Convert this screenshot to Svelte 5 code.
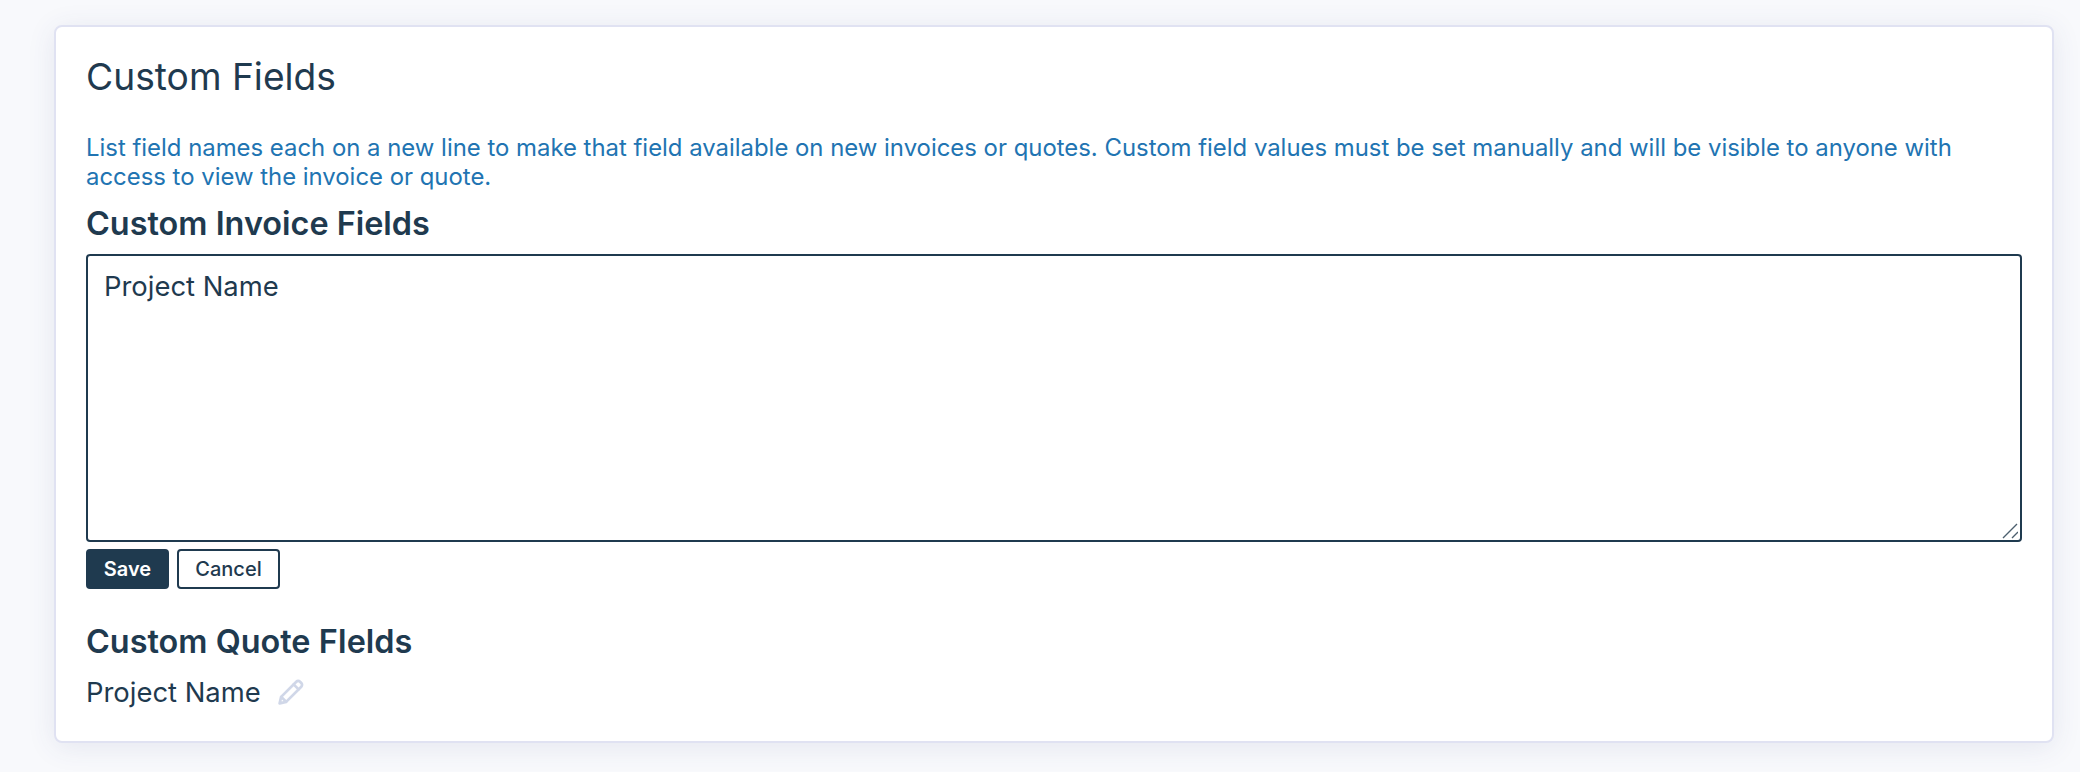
<script lang="ts">
	let invoiceFields = $state('Project Name');
</script>

<main class="page">
	<section class="card">
		<h1 class="title">Custom Fields</h1>
		<p class="help">
			List field names each on a new line to make that field available on new invoices or quotes. Custom field values must be set manually and will be visible to anyone with access to view the invoice or quote.
		</p>
		<h2 class="subtitle">Custom Invoice Fields</h2>
		<div class="input-wrap">
			<textarea class="field-input" bind:value={invoiceFields}></textarea>
			<svg class="grip" viewBox="0 0 16 16" width="16" height="16" stroke="#4c5f6e" stroke-width="1.4">
				<path d="M1 15L15 1M10 15l6-6" />
			</svg>
		</div>
		<div class="actions">
			<button class="btn btn-primary">Save</button>
			<button class="btn btn-outline">Cancel</button>
		</div>
		<h2 class="subtitle quote">Custom Quote FIelds</h2>
		<div class="field-row">
			<span>Project Name</span>
			<svg class="edit" viewBox="0 0 24 24" width="26" height="26" fill="none" stroke="currentColor" stroke-width="2.5" stroke-linejoin="round" stroke-linecap="round">
				<path d="M1.5 22.5l1.4-6L16.9 2.5a2.4 2.4 0 0 1 3.4 0l1.2 1.2a2.4 2.4 0 0 1 0 3.4L7.5 21.1z" />
				<path d="M14.4 5l4.6 4.6M3 16.5l4.5 4.5" />
			</svg>
		</div>
	</section>
</main>

<style>
	:global(body) {
		margin: 0;
		background: #f8f9fc;
	}
	.page {
		box-sizing: border-box;
		height: 772px;
		padding: 25px 26px 29px 54px;
		font-family: Inter, 'Liberation Sans', sans-serif;
		color: #1f3a4f;
	}
	.card {
		box-sizing: border-box;
		height: 718px;
		padding: 28px 30px 0;
		background: #fff;
		border: 2px solid #e0e2f2;
		border-radius: 8px;
		box-shadow: 0 4px 28px rgb(60 70 130 / 0.1);
	}
	.title {
		margin: 0;
		font-size: 37.2px;
		font-weight: 400;
		line-height: 44px;
	}
	.help {
		margin: 34px 0 13px;
		font-size: 23.9px;
		line-height: 29px;
		color: #2174b2;
	}
	.subtitle {
		margin: 0;
		font-size: 32.4px;
		font-weight: 600;
		line-height: 40px;
	}
	.input-wrap {
		position: relative;
		margin-top: 10px;
	}
	.field-input {
		display: block;
		box-sizing: border-box;
		width: 100%;
		height: 288px;
		padding: 14px 16px;
		font: inherit;
		font-size: 27.4px;
		line-height: 32px;
		color: inherit;
		background: #fff;
		border: 2px solid #1f3a4f;
		border-radius: 4px;
		outline: none;
		resize: none;
	}
	.grip {
		position: absolute;
		right: 4px;
		bottom: 3px;
	}
	.actions {
		display: flex;
		gap: 8px;
		margin-top: 7px;
	}
	.btn {
		box-sizing: border-box;
		height: 40px;
		padding: 0;
		font: inherit;
		font-size: 20px;
		font-weight: 500;
		border: 2px solid #1f3a4f;
		border-radius: 4px;
	}
	.btn-primary {
		width: 83px;
		color: #fff;
		font-weight: 600;
		background: #1f3a4f;
	}
	.btn-outline {
		width: 103px;
		color: #1f3a4f;
		background: #fff;
	}
	.quote {
		margin-top: 33px;
	}
	.field-row {
		display: flex;
		align-items: center;
		gap: 17px;
		margin-top: 10px;
		font-size: 27.4px;
		line-height: 40px;
	}
	.edit {
		color: #d0d7e8;
	}
</style>
